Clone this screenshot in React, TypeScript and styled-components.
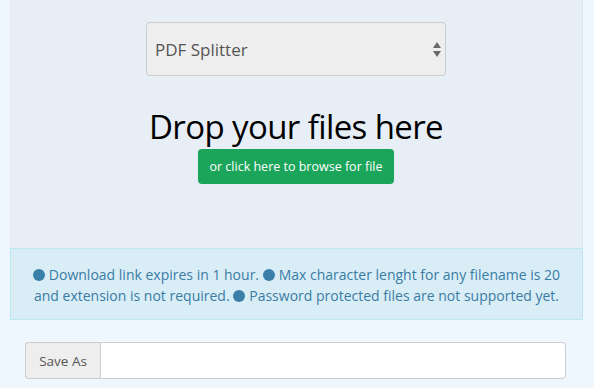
import React from "react";
import styled, { createGlobalStyle } from "styled-components";

const GlobalStyle = createGlobalStyle`
    html, body {
        margin: 0;
        padding: 0;
        background: #eef6fe;
        font-family: "Open Sans", "Liberation Sans", sans-serif;
    }
    * {
        box-sizing: border-box;
    }
`

const Page = styled.div`
    width: 594px;
    height: 388px;
    padding: 0 11px 0 10px;
    overflow: hidden;
`

const DropZone = styled.div`
    height: 248px;
    background: #e7eef6;
    border-right: 1px solid #dde7f1;
    display: flex;
    flex-direction: column;
    align-items: center;
    padding-top: 22px;
`

const SelectBox = styled.div`
    position: relative;
    width: 300px;
    height: 54px;
    background: #eeeeee;
    border: 1px solid #cccccc;
    border-radius: 4px;
    display: flex;
    align-items: center;
    padding-left: 8px;
    font-size: 17px;
    color: #555555;
`

const Arrows = styled.svg`
    position: absolute;
    right: 4px;
    top: 19px;
`

const DropTitle = styled.div`
    margin-top: 31px;
    font-size: 33px;
    line-height: 40px;
    color: #000000;
    letter-spacing: -0.6px;
`

const BrowseButton = styled.button`
    margin-top: 2px;
    width: 196px;
    height: 35px;
    border: none;
    border-radius: 4px;
    background: #1aa55a;
    color: #ffffff;
    font-family: inherit;
    font-size: 12.5px;
    cursor: pointer;
`

const InfoBox = styled.div`
    height: 72px;
    background: #d9edf7;
    border: 1px solid #bce8f1;
    color: #3a7ca3;
    font-size: 14px;
    line-height: 21px;
    text-align: center;
    padding: 15px 6px 0;
`

const InfoInner = styled.div`
    max-width: 540px;
    margin: 0 auto;
`

const Dot = styled.span`
    display: inline-block;
    width: 12px;
    height: 12px;
    border-radius: 50%;
    background: #3a80a8;
    vertical-align: -1px;
    margin-right: 4px;
`

const SaveRow = styled.div`
    margin: 22px 17px 0 15px;
    display: flex;
    height: 37px;
`

const Addon = styled.span`
    width: 75px;
    background: #eeeeee;
    border: 1px solid #cccccc;
    border-right: none;
    border-radius: 4px 0 0 4px;
    display: flex;
    align-items: center;
    justify-content: center;
    font-size: 13.5px;
    color: #555555;
`

const NameInput = styled.input`
    flex: 1;
    border: 1px solid #cccccc;
    border-radius: 0 4px 4px 0;
    background: #ffffff;
    font-family: inherit;
    font-size: 13px;
    outline: none;
`

const notes = [
    "Download link expires in 1 hour.",
    "Max character lenght for any filename is 20 and extension is not required.",
    "Password protected files are not supported yet.",
]

const App = () => {
    return (
        <Page>
            <GlobalStyle />
            <DropZone>
                <SelectBox>
                    PDF Splitter
                    <Arrows width="8" height="15" viewBox="0 0 8 15">
                        <path d="M4 0 L8 6 L0 6 Z" fill="#6a6a6a" />
                        <path d="M4 15 L8 9 L0 9 Z" fill="#6a6a6a" />
                    </Arrows>
                </SelectBox>
                <DropTitle>Drop your files here</DropTitle>
                <BrowseButton>or click here to browse for file</BrowseButton>
            </DropZone>
            <InfoBox>
                <InfoInner>
                    {notes.map(note => (
                        <React.Fragment key={note}>
                            <Dot />{note}{" "}
                        </React.Fragment>
                    ))}
                </InfoInner>
            </InfoBox>
            <SaveRow>
                <Addon>Save As</Addon>
                <NameInput type="text" />
            </SaveRow>
        </Page>
    );
}

export default App;
